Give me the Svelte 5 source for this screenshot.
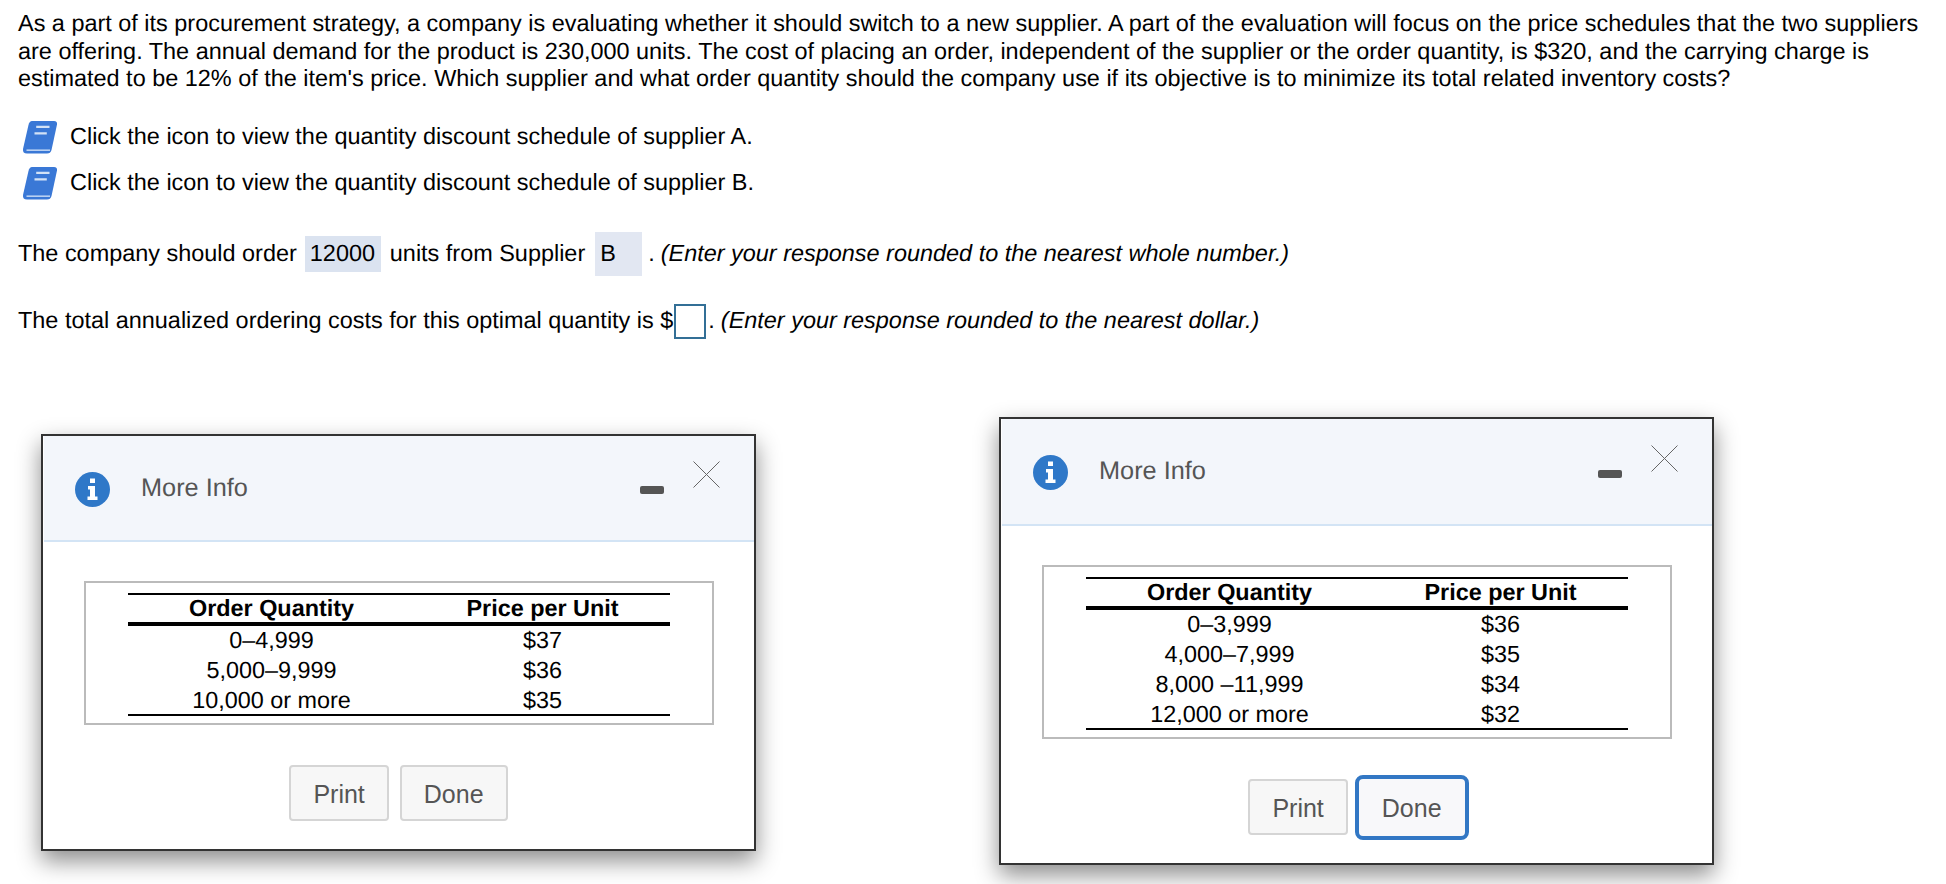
<script lang="ts">
  const schedules = [
    {
      id: 'a',
      rows: [
        ['0–4,999', '$37'],
        ['5,000–9,999', '$36'],
        ['10,000 or more', '$35']
      ],
      focused: false
    },
    {
      id: 'b',
      rows: [
        ['0–3,999', '$36'],
        ['4,000–7,999', '$35'],
        ['8,000 –11,999', '$34'],
        ['12,000 or more', '$32']
      ],
      focused: true
    }
  ];
</script>

{#snippet book()}
  <svg class="book" viewBox="0 0 36 34" aria-hidden="true">
    <path d="M10 1 H32 Q35.5 1 35 4.5 L29.5 30 Q28.5 33.5 25 33.5 H5 Q0.5 33.5 1 29 L6.5 5 Q7.5 1 10 1 Z" fill="#3a78d6" />
    <path d="M4.5 30.2 H28" stroke="#b8d0f2" stroke-width="1.6" fill="none" />
    <path d="M14.2 6.8 H27.5 M12.5 13.3 H24.8" stroke="#d3e2f6" stroke-width="2.3" fill="none" />
  </svg>
{/snippet}

<main class="page">
  <p class="problem">As a part of its procurement strategy, a company is evaluating whether it should switch to a new supplier. A part of the evaluation will focus on the price schedules that the two suppliers are offering. The annual demand for the product is 230,000 units. The cost of placing an order, independent of the supplier or the order quantity, is $320, and the carrying charge is estimated to be 12% of the item's price. Which supplier and what order quantity should the company use if its objective is to minimize its total related inventory costs?</p>

  <div class="links">
    <div class="link">{@render book()}<span>Click the icon to view the quantity discount schedule of supplier A.</span></div>
    <div class="link">{@render book()}<span>Click the icon to view the quantity discount schedule of supplier B.</span></div>
  </div>

  <p class="answer first">
    The company should order <span class="filled qty">12000</span> units from Supplier <span class="filled choice">B</span>. <em>(Enter your response rounded to the nearest whole number.)</em>
  </p>
  <p class="answer second">
    The total annualized ordering costs for this optimal quantity is $<span class="blank"></span>. <em>(Enter your response rounded to the nearest dollar.)</em>
  </p>
</main>

{#each schedules as s}
  <section class="modal {s.id}">
    <header class="modal-head">
      <svg class="info" viewBox="0 0 35 35" aria-hidden="true">
        <circle cx="17.5" cy="17.5" r="17.5" fill="#2f78c8" />
        <path d="M15 6.5 H20 V11 H15 Z M13 14 H20 V24.5 H22.5 V28 H12.5 V24.5 H15 V17.5 H13 Z" fill="#fff" />
      </svg>
      <h2>More Info</h2>
      <span class="minimize"></span>
      <svg class="close" viewBox="0 0 27 27" aria-hidden="true">
        <path d="M0.5 0.5 L26.5 26.5 M26.5 0.5 L0.5 26.5" stroke="#666" stroke-width="1" fill="none" />
      </svg>
    </header>

    <div class="frame">
      <table>
        <thead>
          <tr><th class="qty-col">Order Quantity</th><th>Price per Unit</th></tr>
        </thead>
        <tbody>
          {#each s.rows as row}
            <tr><td>{row[0]}</td><td>{row[1]}</td></tr>
          {/each}
        </tbody>
      </table>
    </div>

    <footer class="actions">
      <button type="button">Print</button>
      <button type="button" class:focused={s.focused}>Done</button>
    </footer>
  </section>
{/each}

<style>
  :global(body) {
    background: #fff;
    color: #000;
    font-family: "Liberation Sans", Arial, sans-serif;
    text-rendering: geometricPrecision;
  }

  .page {
    padding: 10px 0 0 18px;
    font-size: 23.45px;
    line-height: 27.5px;
  }

  p {
    margin: 0;
  }

  .problem {
    width: 1922px;
  }

  .links {
    margin-top: 27px;
    display: flex;
    flex-direction: column;
    gap: 12.5px;
  }

  .link {
    display: flex;
    align-items: center;
    height: 34px;
    gap: 12px;
    padding-left: 4px;
  }

  .book {
    width: 36px;
    height: 34px;
    flex-shrink: 0;
  }

  .answer {
    white-space: nowrap;
  }

  .answer.first {
    margin-top: 32px;
    height: 44px;
    display: flex;
    align-items: center;
    gap: 6px;
  }

  .answer.second {
    margin-top: 27px;
    display: flex;
    align-items: center;
    gap: 6px;
    height: 36px;
  }

  .filled {
    display: inline-flex;
    align-items: center;
    background: #dbe3f0;
    padding: 0 5px;
    margin: 0 2px;
  }

  .qty {
    height: 36px;
    width: 76px;
    box-sizing: border-box;
    margin-right: 3px;
  }

  .choice {
    height: 44px;
    width: 47px;
    box-sizing: border-box;
    background: #e2e7f2;
    margin: 0 0 0 4px;
  }

  .blank {
    width: 32px;
    height: 35px;
    box-sizing: border-box;
    border: 2px solid #336f96;
    margin: 0 -4px 0 -5px;
    background: #fff;
  }

  .modal {
    position: absolute;
    width: 715px;
    box-sizing: border-box;
    background: #fff;
    border: 2px solid #333;
    box-shadow: 0 10px 22px rgba(0, 0, 0, 0.45);
  }

  .modal.a {
    left: 41px;
    top: 434px;
    height: 417px;
  }

  .modal.b {
    left: 999px;
    top: 417px;
    height: 448px;
  }

  .modal-head {
    display: flex;
    align-items: center;
    height: 104px;
    margin-left: 1px;
    padding: 0 34px 0 31px;
    background: #f3f6fb;
    border-bottom: 2px solid #d3e4f5;
  }

  .b .modal-head {
    height: 105px;
  }

  .info {
    width: 35px;
    height: 35px;
    flex-shrink: 0;
    margin-top: 2px;
  }

  h2 {
    margin: 0 0 0 31px;
    font-size: 25.3px;
    font-weight: 400;
    color: #555;
    flex: 1;
  }

  .minimize {
    width: 24px;
    height: 8px;
    border-radius: 2px;
    background: #555;
    margin-top: 4px;
  }

  .close {
    width: 27px;
    height: 27px;
    margin-left: 29px;
    margin-top: -27px;
  }

  .frame {
    margin: 39px 40px 0 41px;
    border: 2px solid #bbb;
    padding: 10px 42px 7px;
  }

  table {
    width: 100%;
    border-collapse: collapse;
    font-size: 23.4px;
    border-top: 2px solid #000;
    border-bottom: 2px solid #000;
  }

  th,
  td {
    padding: 0;
    text-align: center;
  }

  th {
    height: 27px;
    line-height: 27px;
    font-weight: 700;
    border-bottom: 4px solid #000;
  }

  td {
    height: 30px;
    line-height: 28px;
    padding-bottom: 2px;
    box-sizing: border-box;
  }

  tbody tr:last-child td {
    height: 28px;
    padding-bottom: 0;
  }

  .qty-col {
    width: 287px;
  }

  .actions {
    display: flex;
    justify-content: center;
    align-items: center;
    gap: 11px;
    margin-top: 40px;
    height: 56px;
  }

  button {
    height: 56px;
    padding: 2px 22px 0;
    font: inherit;
    font-size: 25px;
    color: #555;
    background: #f7f7f7;
    border: 2px solid #d5d5d5;
    border-radius: 4px;
  }

  button.focused {
    height: 65px;
    padding: 2px 23px 0;
    background: #f8f8fa;
    border: 4px solid #3277c4;
    border-radius: 8px;
  }

  .b .actions {
    gap: 7px;
    padding-left: 4px;
  }
</style>
